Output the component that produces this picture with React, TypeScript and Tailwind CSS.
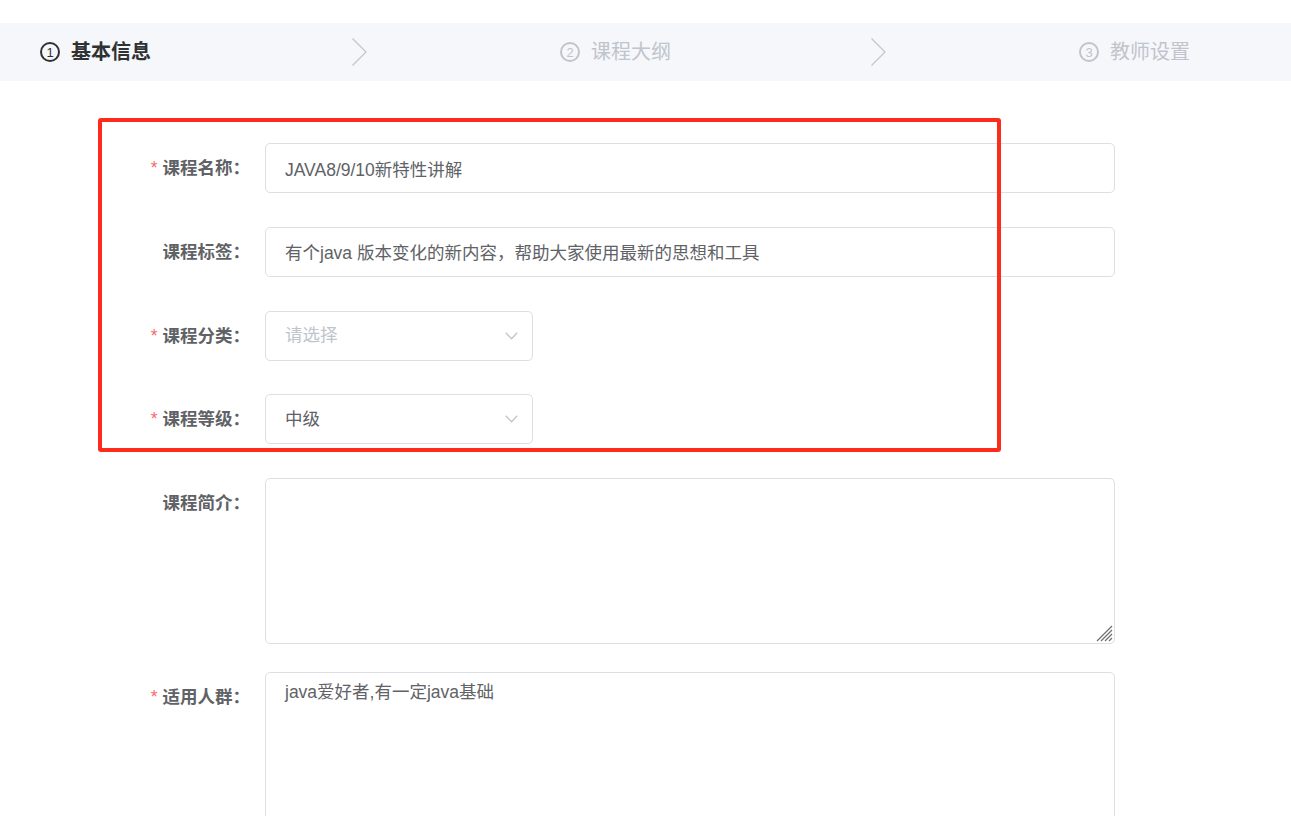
import React from 'react';

const font = "font-[family-name:'Liberation_Sans','Noto_Sans_CJK_SC',sans-serif]";

function StepArrow() {
  return (
    <svg width="15" height="28" viewBox="0 0 15 28" className="shrink-0">
      <polyline points="0.5,0.5 14,14 0.5,27.5" fill="none" stroke="#c0c4cc" strokeWidth="1.2" />
    </svg>
  );
}

function Step({ num, title, active }: { num: number; title: string; active?: boolean }) {
  return (
    <div className={`flex items-center gap-[11px] ${active ? 'text-[#303133]' : 'text-[#c0c4cc]'}`}>
      <div className="w-[20px] h-[20px] rounded-full border-[2px] border-current flex items-center justify-center text-[13px] leading-none">
        {num}
      </div>
      <span className={`text-[20px] ${active ? 'font-bold' : ''}`}>{title}</span>
    </div>
  );
}

function Label({ text, required }: { text: string; required?: boolean }) {
  return (
    <div className="w-[265px] shrink-0 pr-[15px] text-right leading-[50px] text-[17.5px] font-bold text-[#606266]">
      {required && <span className="text-[#f56c6c] mr-[5px] font-normal">*</span>}
      {text}
    </div>
  );
}

function Chevron() {
  return (
    <svg width="13" height="8" viewBox="0 0 13 8" className="shrink-0">
      <polyline points="0.8,0.8 6.5,6.8 12.2,0.8" fill="none" stroke="#c0c4cc" strokeWidth="1.3" />
    </svg>
  );
}

// hatched corner like the Windows textarea grip
function ResizeGrip() {
  return (
    <svg width="18" height="18" viewBox="0 0 18 18" className="absolute right-[2px] bottom-[2px] pointer-events-none">
      <g stroke="#6f6f6f" strokeWidth="1.3">
        <line x1="2" y1="17" x2="17" y2="2" />
        <line x1="6" y1="17" x2="17" y2="6" />
        <line x1="10" y1="17" x2="17" y2="10" />
        <line x1="14" y1="17" x2="17" y2="14" />
      </g>
    </svg>
  );
}

export default function App() {
  const inputCls =
    'w-[850px] h-[50px] border border-[#dcdfe6] rounded-[5px] px-[19px] text-[17.5px] text-[#606266] outline-none';
  const areaCls =
    'block w-[850px] h-[166px] border border-[#dcdfe6] rounded-[5px] px-[19px] py-[6px] leading-[1.5] text-[17.5px] text-[#606266] outline-none resize-none';

  return (
    <div className={`${font} relative w-[1291px] h-[816px] overflow-hidden bg-white pt-[23px]`}>
      {/* Steps */}
      <div className="h-[58px] bg-[#f5f7fa] flex items-center pl-[40px]">
        <div className="w-[312px]">
          <Step num={1} title="基本信息" active />
        </div>
        <StepArrow />
        <div className="w-[311px] ml-[193px]">
          <Step num={2} title="课程大纲" />
        </div>
        <StepArrow />
        <div className="ml-[193px]">
          <Step num={3} title="教师设置" />
        </div>
      </div>

      {/* Form */}
      <div className="pt-[62px]">
        <div className="flex mb-[33.75px]">
          <Label text="课程名称：" required />
          <input readOnly defaultValue="JAVA8/9/10新特性讲解" className={inputCls} />
        </div>
        <div className="flex mb-[33.75px]">
          <Label text="课程标签：" />
          <input
            readOnly
            defaultValue="有个java 版本变化的新内容，帮助大家使用最新的思想和工具"
            className={inputCls}
          />
        </div>
        <div className="flex mb-[33.75px]">
          <Label text="课程分类：" required />
          <div className="w-[268px] h-[50px] border border-[#dcdfe6] rounded-[5px] pl-[19px] pr-[14px] flex items-center justify-between text-[17.5px] text-[#c0c4cc]">
            <span>请选择</span>
            <Chevron />
          </div>
        </div>
        <div className="flex mb-[33.75px]">
          <Label text="课程等级：" required />
          <div className="w-[268px] h-[50px] border border-[#dcdfe6] rounded-[5px] pl-[19px] pr-[14px] flex items-center justify-between text-[17.5px] text-[#606266]">
            <span>中级</span>
            <Chevron />
          </div>
        </div>
        <div className="flex mb-[28px]">
          <Label text="课程简介：" />
          <div className="relative">
            <textarea readOnly className={areaCls} />
            <ResizeGrip />
          </div>
        </div>
        <div className="flex">
          <Label text="适用人群：" required />
          <div className="relative">
            <textarea readOnly defaultValue="java爱好者,有一定java基础" className={areaCls} />
            <ResizeGrip />
          </div>
        </div>
      </div>

      {/* Highlight frame */}
      <div className="absolute left-[98px] top-[118px] w-[903px] h-[334px] border-4 border-[#fe2a1c] rounded-[3px] pointer-events-none" />
    </div>
  );
}
